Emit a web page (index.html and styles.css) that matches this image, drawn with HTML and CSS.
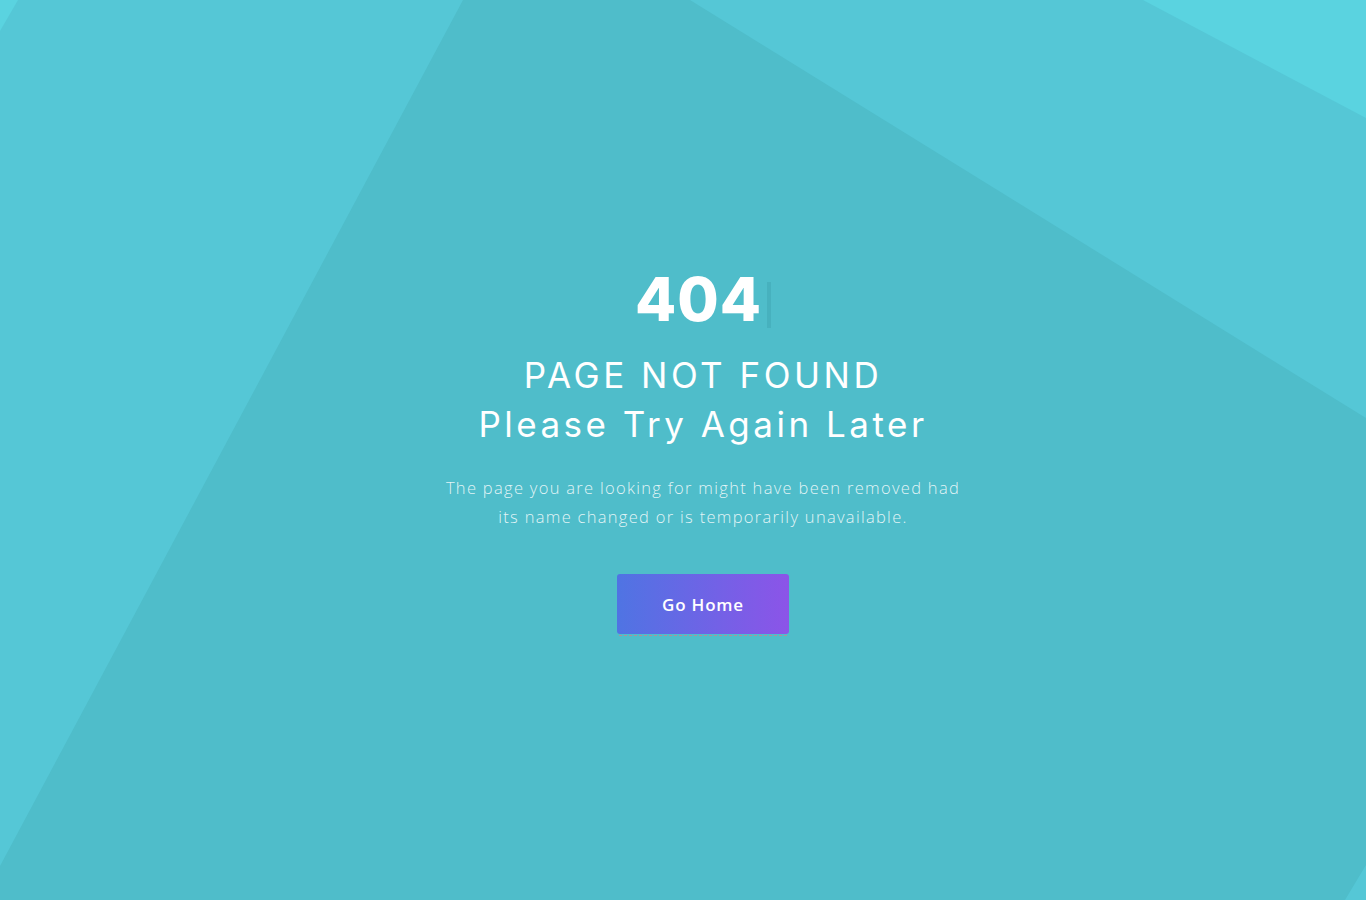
FILE: index.html
```html
<!DOCTYPE html>
<html lang="en">
<head>
<meta charset="utf-8">
<title>404 - Page Not Found</title>
<link rel="stylesheet" href="styles.css">
</head>
<body>
<svg class="bg" viewBox="0 0 1366 900" preserveAspectRatio="none" aria-hidden="true">
  <rect x="0" y="0" width="1366" height="900" fill="#4fbdca"/>
  <polygon points="0,0 463,0 0,866" fill="#55c7d6"/>
  <polygon points="0,0 18,0 0,31" fill="#5ad3e0"/>
  <polygon points="690,0 1366,0 1366,418" fill="#55c7d6"/>
  <polygon points="1143,0 1366,0 1366,118" fill="#5ad3e0"/>
  <polygon points="1366,865 1366,900 1345,900" fill="#55c7d6"/>
</svg>
<main class="notfound">
  <h1 class="code">404<span class="cursor"></span></h1>
  <h2 class="title">PAGE NOT FOUND<br>Please Try Again Later</h2>
  <p class="desc">The page you are looking for might have been removed had<br>its name changed or is temporarily unavailable.</p>
  <a class="btn" href="#">Go Home</a>
</main>
</body>
</html>
```

FILE: styles.css
```css
html, body {
  margin: 0;
  padding: 0;
  height: 100%;
}

body {
  position: relative;
  overflow: hidden;
  background: #4fbdca;
  font-family: "Inter", "Roboto", sans-serif;
  color: #fff;
}

.bg {
  position: absolute;
  inset: 0;
  width: 100%;
  height: 100%;
  display: block;
  z-index: 0;
}

.notfound {
  position: relative;
  z-index: 1;
  box-sizing: border-box;
  height: 100%;
  padding: 3px 0 0 40px;
  display: flex;
  flex-direction: column;
  align-items: center;
  justify-content: center;
  text-align: center;
}

.code {
  margin: 0;
  font-family: "Inter", sans-serif;
  font-weight: 800;
  font-size: 60px;
  line-height: 60px;
  letter-spacing: 1px;
  display: flex;
  align-items: center;
}

.cursor {
  display: inline-block;
  width: 4px;
  height: 46px;
  margin-left: 5px;
  margin-top: 12px;
  background: rgba(40, 120, 140, 0.18);
}

.title {
  margin: 22px 0 0;
  font-family: "Inter", sans-serif;
  font-weight: 400;
  font-size: 35px;
  line-height: 49px;
  letter-spacing: 3.5px;
}

.desc {
  margin: 24px 0 0;
  font-family: "Open Sans", sans-serif;
  font-weight: 300;
  font-size: 16.5px;
  line-height: 29px;
  letter-spacing: 1.3px;
  color: rgba(255, 255, 255, 0.85);
}

.btn {
  margin-top: 43px;
  position: relative;
  display: flex;
  align-items: center;
  justify-content: center;
  width: 172px;
  height: 60px;
  border-radius: 3px;
  background: linear-gradient(90deg, #4f74e3 0%, #8c54e8 100%);
  color: #fff;
  text-decoration: none;
  font-family: "Open Sans", sans-serif;
  font-weight: 600;
  font-size: 17px;
  letter-spacing: 0.8px;
}

.btn::after {
  content: "";
  position: absolute;
  left: 2px;
  right: 2px;
  bottom: -2px;
  border-bottom: 1px dashed rgba(255, 110, 110, 0.55);
}
```
